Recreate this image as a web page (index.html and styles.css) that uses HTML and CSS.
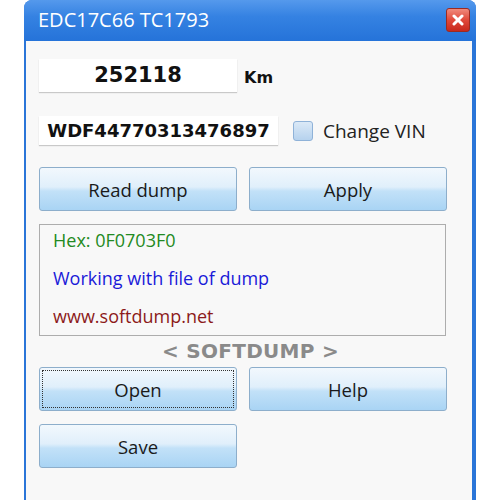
FILE: index.html
```html
<!DOCTYPE html>
<html lang="en">
<head>
<meta charset="UTF-8">
<title>EDC17C66 TC1793</title>
<link rel="stylesheet" href="styles.css">
</head>
<body>

<div class="window">
    <div class="titlebar">
        <span class="title">EDC17C66 TC1793</span>
        <span class="close-btn">
            <svg width="12" height="12" viewBox="0 0 12 12">
                <path d="M2 2 L10 10 M10 2 L2 10" stroke="#fff" stroke-width="3" stroke-linecap="round"/>
            </svg>
        </span>
    </div>

    <div class="client">
        <div class="row km-row">
            <div class="field km-field">252118</div>
            <span class="unit">Km</span>
        </div>

        <div class="row vin-row">
            <div class="field vin-field">WDF44770313476897</div>
            <label class="check">
                <span class="check-box"></span>
                Change VIN
            </label>
        </div>

        <div class="btn-grid first">
            <button class="btn">Read dump</button>
            <button class="btn">Apply</button>
        </div>

        <div class="log">
            <div class="log-line hex">Hex: 0F0703F0</div>
            <div class="log-line info">Working with file of dump</div>
            <div class="log-line site">www.softdump.net</div>
        </div>

        <div class="brand">&lt; SOFTDUMP &gt;</div>

        <div class="btn-grid">
            <button class="btn focused"><span>Open</span></button>
            <button class="btn">Help</button>
            <button class="btn">Save</button>
        </div>
    </div>
</div>

</body>
</html>
```

FILE: styles.css
```css
body {
    margin: 0;
    padding: 0;
    background-color: #ffffff;
    font-family: "Open Sans", "Noto Sans", sans-serif;
}

.window {
    margin-left: 24px;
    width: 452px;
    height: 520px;
    border-radius: 8px 8px 0 0;
    background: #2a75d8;
    display: flex;
    flex-direction: column;
    overflow: hidden;
}

.titlebar {
    height: 41px;
    flex-shrink: 0;
    display: flex;
    align-items: center;
    justify-content: space-between;
    padding: 0 6px 0 14px;
    background: linear-gradient(to bottom, #5599ec 0%, #3582e2 40%, #2573d9 100%);
}

.title {
    color: #ffffff;
    font-size: 20px;
    margin-top: -3px;
}

.close-btn {
    width: 22px;
    height: 22px;
    border: 1px solid #9b2b22;
    border-radius: 3px;
    background: linear-gradient(to bottom, #f08a7c 0%, #e0493a 50%, #c8281c 100%);
    display: flex;
    align-items: center;
    justify-content: center;
    margin-top: -1px;
}

.client {
    flex: 1;
    margin: 0 4px 0 2px;
    background-color: #f8f8f8;
    padding: 18px 13px 0 13px;
}

.row {
    display: flex;
    align-items: center;
}

.field {
    background: #ffffff;
    box-shadow: 0 1px 1px #c9c9c9;
    font-family: "DejaVu Sans", Verdana, sans-serif;
    font-weight: bold;
    color: #111;
    text-align: center;
    box-sizing: border-box;
}

.km-field {
    width: 198px;
    height: 33px;
    line-height: 33px;
    font-size: 21px;
}

.unit {
    margin-left: 7px;
    font-family: "DejaVu Sans", Verdana, sans-serif;
    font-weight: bold;
    font-size: 16px;
    color: #111;
    margin-top: 3px;
}

.vin-row {
    margin-top: 24px;
}

.vin-field {
    width: 239px;
    height: 29px;
    line-height: 29px;
    font-size: 18px;
}

.check {
    display: flex;
    align-items: center;
    margin-left: 15px;
    font-size: 19px;
    color: #222;
}

.check-box {
    width: 18px;
    height: 18px;
    border: 1px solid #8fb2d8;
    border-radius: 3px;
    background: linear-gradient(to bottom, #dbe9f7, #b6d2ee);
    margin-right: 10px;
}

.btn-grid {
    display: grid;
    grid-template-columns: 198px 198px;
    gap: 13px 12px;
}

.btn-grid.first {
    margin-top: 22px;
}

.btn {
    height: 44px;
    border: 1px solid #8daecb;
    border-radius: 3px;
    background: linear-gradient(to bottom, #f2f8fd 0%, #e0effb 45%, #c2e1f8 55%, #a9d4f4 100%);
    font-family: "Open Sans", "Noto Sans", sans-serif;
    font-size: 18.5px;
    color: #1a1a1a;
    padding: 0;
    cursor: pointer;
}

.btn.focused {
    padding: 2px;
}

.btn.focused span {
    display: flex;
    align-items: center;
    justify-content: center;
    height: 100%;
    border: 1px dotted #333;
    box-sizing: border-box;
}

.log {
    margin-top: 13px;
    width: 407px;
    height: 112px;
    box-sizing: border-box;
    border: 1px solid #adadad;
    padding: 2px 0 0 13px;
    font-size: 18px;
}

.log-line {
    height: 38px;
    line-height: 26px;
}

.hex {
    color: #238a23;
}

.info {
    color: #1a1ad8;
}

.site {
    color: #8c1a1a;
}

.brand {
    width: 407px;
    padding-left: 8px;
    text-align: center;
    font-family: "DejaVu Sans", Verdana, sans-serif;
    font-weight: bold;
    font-size: 20px;
    letter-spacing: 0.3px;
    color: #8a8a8a;
    height: 31px;
    line-height: 30px;
}
```
